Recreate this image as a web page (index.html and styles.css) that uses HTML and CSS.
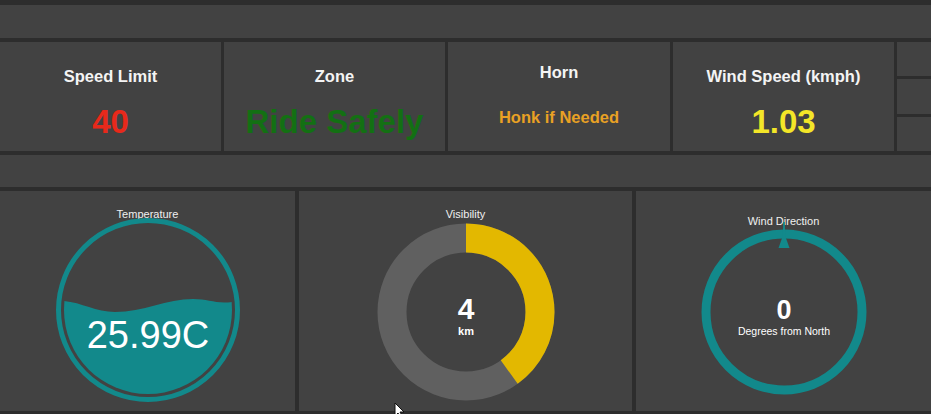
FILE: index.html
```html
<!DOCTYPE html>
<html>
<head>
<meta charset="utf-8">
<link rel="stylesheet" href="styles.css">
</head>
<body>
<div class="dash">
  <div class="bar"></div>
  <div class="stats">
    <div class="card">
      <div class="title">Speed Limit</div>
      <div class="value red">40</div>
    </div>
    <div class="card">
      <div class="title">Zone</div>
      <div class="value green">Ride Safely</div>
    </div>
    <div class="card card-horn">
      <div class="title">Horn</div>
      <div class="value-sm orange">Honk if Needed</div>
    </div>
    <div class="card">
      <div class="title">Wind Speed (kmph)</div>
      <div class="value yellow">1.03</div>
    </div>
    <div class="stack">
      <div class="cell"></div>
      <div class="cell"></div>
      <div class="cell"></div>
    </div>
  </div>
  <div class="bar bar2"></div>
  <div class="gauges">
    <div class="gauge">
      <div class="gtitle">Temperature</div>
      <svg class="g-temp" width="186" height="186" viewBox="0 0 186 186">
        <defs>
          <clipPath id="tclip"><circle cx="93" cy="93" r="84"/></clipPath>
        </defs>
        <circle cx="93" cy="93" r="89.5" fill="none" stroke="#12898b" stroke-width="5"/>
        <path clip-path="url(#tclip)" fill="#12898b" d="M0 84 C22 82 38 95 60 95 C88 95 112 82 138 82 C156 82 164 89 186 83 L186 186 L0 186 Z"/>
        <text class="t-big" x="93" y="131" text-anchor="middle">25.99C</text>
      </svg>
    </div>
    <div class="gauge">
      <div class="gtitle">Visibility</div>
      <svg class="g-vis" width="180" height="180" viewBox="0 0 180 180">
        <circle cx="90" cy="90" r="74" fill="none" stroke="#606060" stroke-width="29"/>
        <circle cx="90" cy="90" r="74" fill="none" stroke="#e3b800" stroke-width="29" stroke-dasharray="186 465" transform="rotate(-90 90 90)"/>
        <text class="t-num" x="90" y="97" text-anchor="middle">4</text>
        <text class="t-unit" x="90" y="113" text-anchor="middle">km</text>
      </svg>
    </div>
    <div class="gauge gauge-wind">
      <div class="gtitle">Wind Direction</div>
      <svg class="g-wind" width="176" height="176" viewBox="0 0 176 176">
        <circle cx="88" cy="88" r="78" fill="none" stroke="#12898b" stroke-width="9"/>
        <polygon fill="#12898b" points="87.2,-2 88.8,-2 89.2,12 93.5,24 82.5,24 86.8,12"/>
        <text class="t-num2" x="88" y="95" text-anchor="middle">0</text>
        <text class="t-sub" x="88" y="111" text-anchor="middle">Degrees from North</text>
      </svg>
    </div>
  </div>
</div>
<svg class="cursor" width="12" height="16" viewBox="0 0 12 16">
  <path d="M1 1 L1 14 L4 11 L6.5 15.5 L8.5 14.5 L6 10 L10 10 Z" fill="#fff" stroke="#111" stroke-width="1"/>
</svg>
</body>
</html>
```

FILE: styles.css
```css
html, body {
  margin: 0;
  padding: 0;
}
body {
  background: #2d2d2d;
  width: 931px;
  height: 414px;
  overflow: hidden;
  font-family: "Liberation Sans", Arial, sans-serif;
  color: #fff;
}
.dash {
  display: flex;
  flex-direction: column;
  gap: 4px;
  padding-top: 5px;
}
.bar {
  height: 33px;
  background: #424242;
}
.bar2 {
  height: 32px;
}
.stats {
  display: grid;
  grid-template-columns: 221px 221px 222px 221px 1fr;
  column-gap: 3px;
  height: 109px;
}
.card {
  background: #424242;
  display: flex;
  flex-direction: column;
  align-items: center;
  padding-top: 24px;
  box-sizing: border-box;
}
.title {
  font-weight: bold;
  font-size: 16.5px;
  line-height: 20px;
  color: #f4f4f4;
}
.value {
  margin-top: 17px;
  font-weight: bold;
  font-size: 33px;
  line-height: 38px;
}
.card-horn {
  padding-top: 20px;
}
.value-sm {
  margin-top: 25px;
  font-weight: bold;
  font-size: 16.5px;
  line-height: 20px;
}
.red { color: #e8291b; }
.green { color: #137013; }
.orange { color: #e9a124; }
.yellow { color: #f3e628; }
.stack {
  display: flex;
  flex-direction: column;
  gap: 3px;
}
.cell {
  flex: 1;
  background: #424242;
}
.gauges {
  display: grid;
  grid-template-columns: 295px 333px 1fr;
  column-gap: 4px;
  height: 220px;
}
.gauge {
  background: #424242;
  display: flex;
  flex-direction: column;
  align-items: center;
  padding-top: 17px;
  box-sizing: border-box;
}
.gauge-wind {
  padding-top: 24px;
}
.gtitle {
  font-size: 11px;
  line-height: 13px;
  color: #f0f0f0;
}
.g-temp {
  margin-top: -4px;
  display: block;
}
.g-vis {
  margin-top: 1px;
  display: block;
}
.g-wind {
  margin-top: -4.5px;
  display: block;
  overflow: visible;
}
svg text {
  font-family: "Liberation Sans", Arial, sans-serif;
  fill: #fff;
}
.t-big {
  font-size: 38px;
}
.t-num {
  font-size: 30px;
  font-weight: bold;
}
.t-unit {
  font-size: 11px;
  font-weight: bold;
}
.t-num2 {
  font-size: 27px;
  font-weight: bold;
}
.t-sub {
  font-size: 10.5px;
}
.cursor {
  position: absolute;
  left: 394px;
  top: 402px;
}
```
